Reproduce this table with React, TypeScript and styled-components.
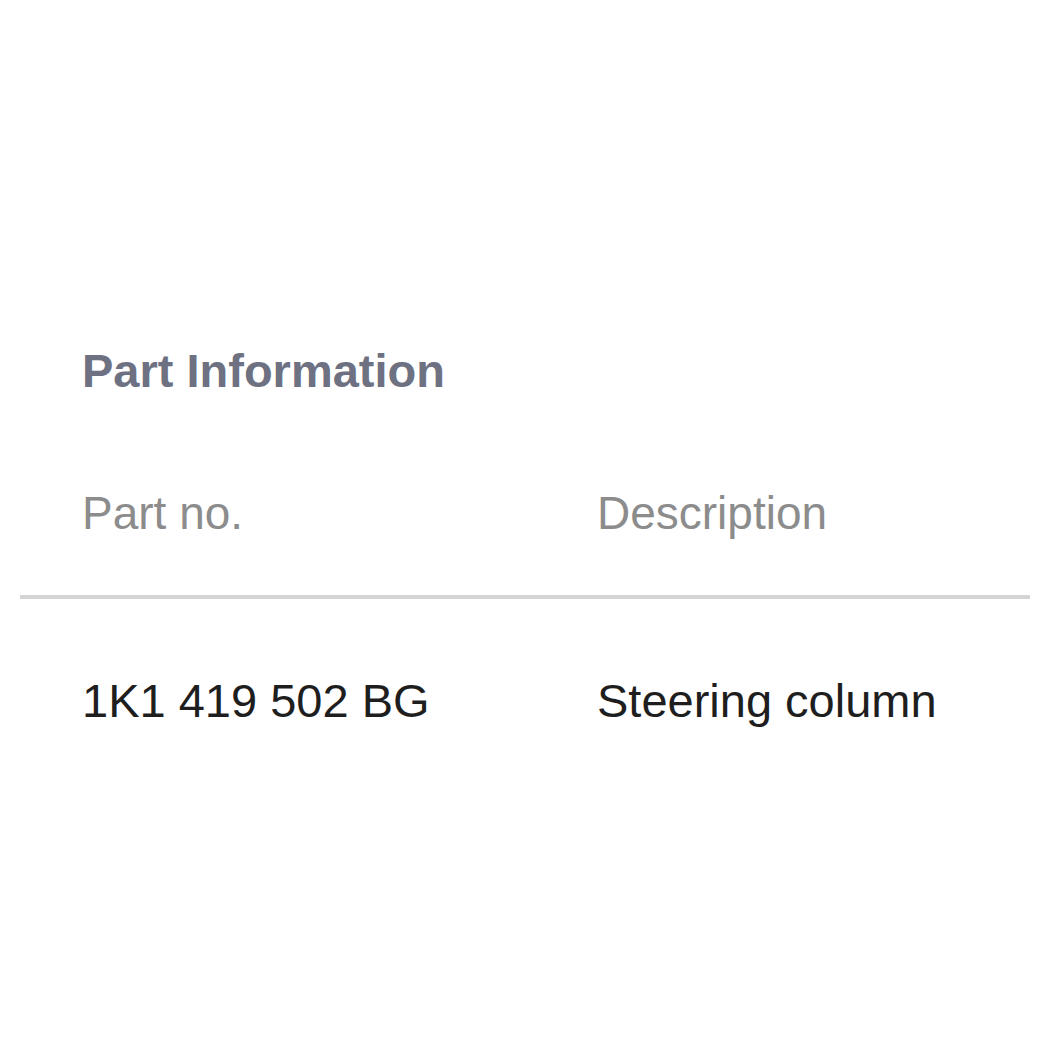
import React from 'react';
import styled, { createGlobalStyle } from 'styled-components';

const GlobalStyle = createGlobalStyle`
  body {
    margin: 0;
    background: #ffffff;
    font-family: "Liberation Sans", Arial, sans-serif;
  }
`;

const Page = styled.div`
  width: 1050px;
  height: 1050px;
  box-sizing: border-box;
  padding: 344px 20px 0;
`;

const Title = styled.h2`
  margin: 0 0 89px 62px;
  font-size: 47px;
  line-height: 54px;
  font-weight: 700;
  color: #6e7182;
`;

const Table = styled.div`
  display: grid;
  grid-template-columns: 515px 1fr;
`;

const Cell = styled.div<{ $head?: boolean }>`
  padding: ${(p) => (p.$head ? '0 0 55px 62px' : '75px 0 0 62px')};
  font-size: ${(p) => (p.$head ? '46px' : '47px')};
  line-height: 53px;
  color: ${(p) => (p.$head ? '#8c8c8c' : '#1e1e1e')};
  border-bottom: ${(p) => (p.$head ? '4px solid #d4d4d4' : 'none')};
  white-space: nowrap;
`;

const App: React.FC = () => {
  return (
    <Page>
      <GlobalStyle />
      <Title>Part Information</Title>
      <Table>
        <Cell $head>Part no.</Cell>
        <Cell $head>Description</Cell>
        <Cell>1K1 419 502 BG</Cell>
        <Cell>Steering column</Cell>
      </Table>
    </Page>
  );
};

export default App;
